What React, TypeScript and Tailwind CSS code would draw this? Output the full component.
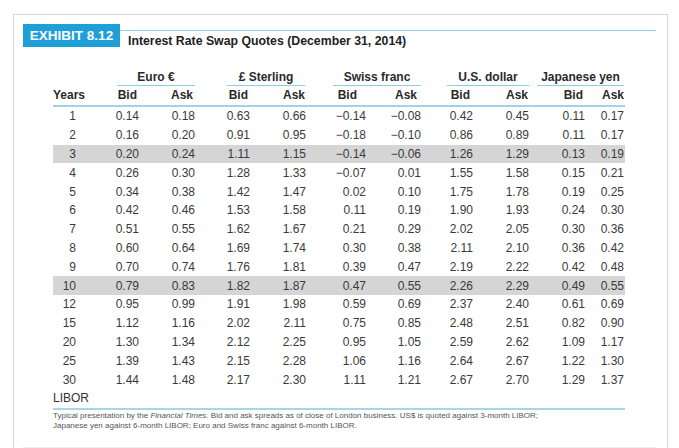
const years = [1, 2, 3, 4, 5, 6, 7, 8, 9, 10, 12, 15, 20, 25, 30]

const M = '\u2212'

// each row: euro bid/ask, sterling bid/ask, swiss bid/ask, usd bid/ask, yen bid/ask
const quotes: string[][] = [
  ['0.14', '0.18', '0.63', '0.66', `${M}0.14`, `${M}0.08`, '0.42', '0.45', '0.11', '0.17'],
  ['0.16', '0.20', '0.91', '0.95', `${M}0.18`, `${M}0.10`, '0.86', '0.89', '0.11', '0.17'],
  ['0.20', '0.24', '1.11', '1.15', `${M}0.14`, `${M}0.06`, '1.26', '1.29', '0.13', '0.19'],
  ['0.26', '0.30', '1.28', '1.33', `${M}0.07`, '0.01', '1.55', '1.58', '0.15', '0.21'],
  ['0.34', '0.38', '1.42', '1.47', '0.02', '0.10', '1.75', '1.78', '0.19', '0.25'],
  ['0.42', '0.46', '1.53', '1.58', '0.11', '0.19', '1.90', '1.93', '0.24', '0.30'],
  ['0.51', '0.55', '1.62', '1.67', '0.21', '0.29', '2.02', '2.05', '0.30', '0.36'],
  ['0.60', '0.64', '1.69', '1.74', '0.30', '0.38', '2.11', '2.10', '0.36', '0.42'],
  ['0.70', '0.74', '1.76', '1.81', '0.39', '0.47', '2.19', '2.22', '0.42', '0.48'],
  ['0.79', '0.83', '1.82', '1.87', '0.47', '0.55', '2.26', '2.29', '0.49', '0.55'],
  ['0.95', '0.99', '1.91', '1.98', '0.59', '0.69', '2.37', '2.40', '0.61', '0.69'],
  ['1.12', '1.16', '2.02', '2.11', '0.75', '0.85', '2.48', '2.51', '0.82', '0.90'],
  ['1.30', '1.34', '2.12', '2.25', '0.95', '1.05', '2.59', '2.62', '1.09', '1.17'],
  ['1.39', '1.43', '2.15', '2.28', '1.06', '1.16', '2.64', '2.67', '1.22', '1.30'],
  ['1.44', '1.48', '2.17', '2.30', '1.11', '1.21', '2.67', '2.70', '1.29', '1.37'],
]

const shaded = [3, 10]

const cols = 'grid grid-cols-[34px_52px_56px_55px_56px_60px_55px_52px_56px_56px_40px]'

const groups = [
  { label: 'Euro \u20ac', cls: 'ml-[30px]' },
  { label: '\u00a3 Sterling', cls: 'ml-[32px] mr-[1px]' },
  { label: 'Swiss franc', cls: 'ml-[27px]' },
  { label: 'U.S. dollar', cls: 'ml-[26px]' },
  { label: 'Japanese yen', cls: 'ml-[8px] mr-[1px]' },
]

const subHeads = [
  { label: 'Bid', cls: 'pr-[2px]' },
  { label: 'Ask', cls: 'pr-[2px]' },
  { label: 'Bid', cls: 'pr-[2px]' },
  { label: 'Ask', cls: 'pr-[1px]' },
  { label: 'Bid', cls: 'pr-[9px]' },
  { label: 'Ask', cls: 'pr-[4px]' },
  { label: 'Bid', cls: 'pr-[3px]' },
  { label: 'Ask', cls: 'pr-[1px]' },
  { label: 'Bid', cls: 'pr-[2px]' },
  { label: 'Ask', cls: 'pr-[1px]' },
]

export default function App() {
  return (
    <div
      className="w-[679px] h-[448px] overflow-hidden bg-white pt-[14px] pl-[13px]"
      style={{ fontFamily: '"Liberation Sans", Arial, sans-serif' }}
    >
      <div className="w-[655px] h-[460px] border border-[#d6d6d6]">
        {/* exhibit heading */}
        <div className="flex pt-[9px] pl-[9px] pr-[11px]">
          <div className="w-[97px] h-[23px] bg-[#1f9fd8] flex items-center justify-center text-white font-bold text-[13.5px] leading-none">
            EXHIBIT 8.12
          </div>
          <div className="flex-1 mt-[6px] border-t border-[#8fd0e4]">
            <div className="pl-[8px] pt-[3px] text-[12.3px] leading-[14px] font-bold text-[#222]">
              Interest Rate Swap Quotes (December 31, 2014)
            </div>
          </div>
        </div>

        {/* table */}
        <div className="ml-[39px] w-[572px] mt-[22px]">
          <div className={`${cols} text-[12px] font-bold text-[#2a2a2a]`}>
            <div />
            {groups.map((g) => (
              <div
                key={g.label}
                className={`col-span-2 ${g.cls} text-center leading-[14px] pb-[1px] border-b-[1.5px] border-[#8fcde0]`}
              >
                {g.label}
              </div>
            ))}
          </div>
          <div
            className={`${cols} h-[21px] text-[12px] font-bold text-[#2a2a2a] border-b-2 border-[#9fd3e6] items-center pb-[1px]`}
          >
            <div className="text-left">Years</div>
            {subHeads.map((h, i) => (
              <div key={i} className={`text-right ${h.cls}`}>
                {h.label}
              </div>
            ))}
          </div>
          {years.map((y, r) => (
            <div
              key={y}
              className={`${cols} h-[18.8px] items-center text-[12px] text-[#3a3a3a] ${
                shaded.includes(y) ? 'bg-[#d5d5d5]' : ''
              }`}
            >
              <div className="text-right pr-[11px]">{y}</div>
              {quotes[r].map((v, i) => (
                <div key={i} className={`text-right ${i === 9 ? 'pr-[1px]' : ''}`}>
                  {v}
                </div>
              ))}
            </div>
          ))}
          <div className="h-[19px] flex items-center text-[12px] text-[#333]">LIBOR</div>
          <div className="border-t-2 border-[#a6d6e7]" />
          <p className="pt-[1px] text-[8px] leading-[10px] text-[#555]">
            Typical presentation by the <span className="italic">Financial Times</span>. Bid and ask spreads as
            of close of London business. US$ is quoted against 3-month LIBOR;
            <br />
            Japanese yen against 6-month LIBOR; Euro and Swiss franc against 6-month LIBOR.
          </p>
        </div>

        <div className="mx-[9px] mr-[11px] mt-[16px] border-t border-[#eeeeee]" />
      </div>
    </div>
  )
}
